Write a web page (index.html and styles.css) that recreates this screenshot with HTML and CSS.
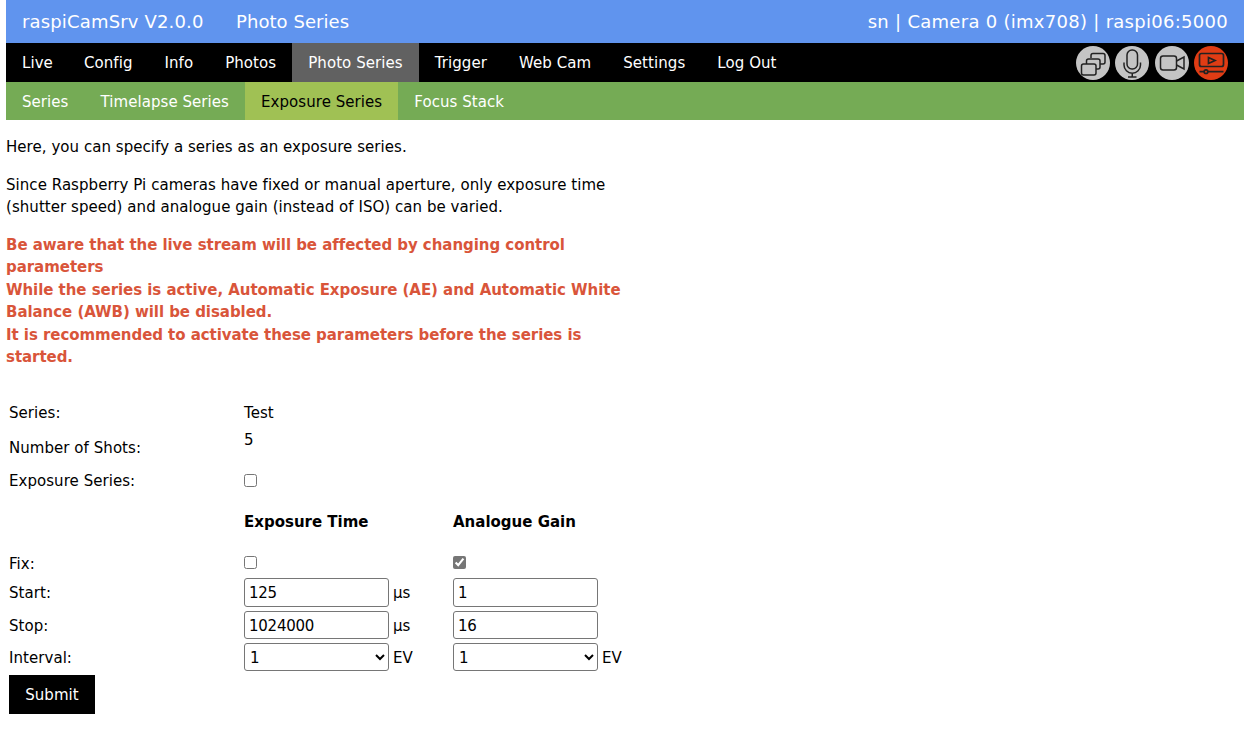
FILE: index.html
```html
<!DOCTYPE html>
<html lang="en">
<head>
<meta charset="utf-8">
<title>raspiCamSrv</title>
<link rel="stylesheet" href="styles.css">
</head>
<body>
<header class="top">
  <div class="top-left"><span>raspiCamSrv V2.0.0</span><span class="page-name">Photo Series</span></div>
  <div class="top-right">sn | Camera 0 (imx708) | raspi06:5000</div>
</header>
<nav class="nav">
  <a class="nav-item">Live</a><a class="nav-item">Config</a><a class="nav-item">Info</a><a class="nav-item">Photos</a><a class="nav-item active">Photo Series</a><a class="nav-item">Trigger</a><a class="nav-item">Web Cam</a><a class="nav-item">Settings</a><a class="nav-item">Log Out</a>
  <div class="icons">
    <span class="icon"><svg viewBox="0 0 34 34" width="34" height="34" fill="none" stroke="#222" stroke-width="1.500"><path d="M15 12v-2.500a2 2 0 0 1 2-2h10a2 2 0 0 1 2 2v6.500a2 2 0 0 1-2 2h-3"/><path d="M10.500 18v-3a2 2 0 0 1 2-2h9.500a2 2 0 0 1 2 2v6a2 2 0 0 1-2 2h-2"/><rect x="5.500" y="18" width="14.500" height="11" rx="2"/></svg></span>
    <span class="icon"><svg viewBox="0 0 34 34" width="34" height="34" fill="none" stroke="#222" stroke-width="1.500"><rect x="12" y="4" width="10.500" height="19" rx="5"/><path d="M9 16.500v2.500a8.250 8.250 0 0 0 16.500 0v-2.500M17.250 27.500V31M13 31h8.500"/></svg></span>
    <span class="icon"><svg viewBox="0 0 34 34" width="34" height="34" fill="none" stroke="#222" stroke-width="1.500"><rect x="5.500" y="10" width="16" height="14" rx="2.500"/><path d="M21.500 15l7.500-4v12l-7.500-4"/></svg></span>
    <span class="icon live"><svg viewBox="0 0 34 34" width="34" height="34" fill="none" stroke="#222" stroke-width="1.700"><rect x="5.500" y="7.500" width="24" height="13" rx="2"/><path d="M14.500 11.500l6.500 3-6.500 3z"/><path d="M5.500 25.700h4.500M14 25.700h15.500"/><circle cx="12" cy="25.700" r="1.800"/></svg></span>
  </div>
</nav>
<nav class="subnav">
  <a class="sub-item">Series</a><a class="sub-item">Timelapse Series</a><a class="sub-item active">Exposure Series</a><a class="sub-item">Focus Stack</a>
</nav>
<main class="content">
  <p class="intro">Here, you can specify a series as an exposure series.</p>
  <p class="para">Since Raspberry Pi cameras have fixed or manual aperture, only exposure time (shutter speed) and analogue gain (instead of ISO) can be varied.</p>
  <p class="warn">Be aware that the live stream will be affected by changing control parameters<br>While the series is active, Automatic Exposure (AE) and Automatic White Balance (AWB) will be disabled.<br>It is recommended to activate these parameters before the series is started.</p>
  <form class="form">
    <table class="tbl">
      <tr class="r-series"><td class="c1">Series:</td><td colspan="3">Test</td></tr>
      <tr class="r-shots"><td class="c1 low">Number of Shots:</td><td colspan="3" class="high">5</td></tr>
      <tr class="r-exp"><td class="c1">Exposure Series:</td><td colspan="3"><input class="check" type="checkbox"></td></tr>
      <tr class="r-head"><td class="c1"></td><th class="c2">Exposure Time</th><th colspan="2">Analogue Gain</th></tr>
      <tr class="r-fix"><td class="c1">Fix:</td><td class="c2"><input class="check" type="checkbox"></td><td colspan="2"><input class="check" type="checkbox" checked></td></tr>
      <tr class="r-in r-start"><td class="c1">Start:</td><td class="c2"><input class="field tall" value="125"><span class="unit">µs</span></td><td class="c3"><input class="field tall" value="1"></td></tr>
      <tr class="r-in"><td class="c1">Stop:</td><td class="c2"><input class="field" value="1024000"><span class="unit">µs</span></td><td class="c3"><input class="field" value="16"></td></tr>
      <tr class="r-in"><td class="c1">Interval:</td><td class="c2"><select class="field pick"><option>1</option></select><span class="unit">EV</span></td><td class="c3"><select class="field pick"><option>1</option></select><span class="unit">EV</span></td></tr>
    </table>
    <button class="submit" type="button">Submit</button>
  </form>
</main>
</body>
</html>
```
FILE: styles.css
```css
* { box-sizing: border-box; }
html, body { margin: 0; }
body {
  padding: 0 5px 0 6px;
  font-family: "DejaVu Sans", Verdana, sans-serif;
  font-size: 15px;
  line-height: 22.5px;
  letter-spacing: 0.05px;
  color: #000;
  background: #fff;
}
.top {
  height: 43px;
  background: #6094ee;
  color: #fff;
  font-size: 18px;
  display: flex;
  justify-content: space-between;
  align-items: center;
  padding: 2px 16px 0;
}
.top-left { display: flex; gap: 32.500px; letter-spacing: 0.16px; }
.page-name { letter-spacing: 0.05px; }
.top-right { letter-spacing: 0.28px; }
.nav {
  height: 39px;
  background: #000;
  color: #fff;
  display: flex;
  align-items: stretch;
}
.nav-item { padding: 2px 16px 0; display: flex; align-items: center; letter-spacing: 0.07px; }
.nav-item:first-child { padding-right: 15px; }
.nav-item.active { background: #616161; }
.icons { margin-left: auto; display: flex; gap: 5.340px; align-items: center; padding: 1px 16px 0 0; }
.icon { width: 34px; height: 34px; border-radius: 50%; background: #c4c4c4; display: block; }
.icon.live { background: #e03c14; }
.icon svg { display: block; }
.subnav {
  height: 38px;
  background: #75ab55;
  color: #fff;
  display: flex;
}
.sub-item { padding: 2px 16px 0; display: flex; align-items: center; letter-spacing: 0.06px; }
.sub-item.active { background: #a0c154; color: #000; }
.content { width: 630px; }
.intro { margin: 16px 0 15px; }
.para { margin: 15px 0; }
.warn { margin: 15px 0 0; color: #d9553a; font-weight: 700; letter-spacing: -0.05px; }
.form { margin-top: 30px; }
.tbl { border-collapse: collapse; }
.tbl td, .tbl th { padding: 0 3px; text-align: left; font-weight: 400; vertical-align: middle; }
.tbl th { font-weight: 700; letter-spacing: 0; padding-bottom: 1px; }
.c1 { width: 235px; }
.c2 { width: 209px; }
.c3 { width: 180px; }
.r-series { height: 30px; }
.r-shots { height: 38px; }
.r-exp { height: 30px; }
.r-head { height: 53px; }
.r-fix { height: 28.500px; }
.r-in { height: 32px; }
.r-start { height: 33px; }
.tbl .r-in td { vertical-align: top; line-height: 30px; }
.tbl .low { padding-top: 2px; }
.tbl .high { vertical-align: top; }
.check { width: 13px; height: 13px; margin: 0 0 3px; display: block; accent-color: #767676; }
.field {
  width: 145px;
  height: 28px;
  margin: 0;
  padding: 2px 4px 1px;
  font: 15px "DejaVu Sans", Verdana, sans-serif;
  letter-spacing: -0.25px;
  border: 1px solid #767676;
  border-radius: 3px;
  background: #fff;
  color: #000;
  vertical-align: top;
}
.tall { height: 29px; }
.pick { padding: 2px 1px 1px; }
.unit { margin-left: 4px; }
.submit {
  display: block;
  margin: 0 0 0 3px;
  width: 86px;
  height: 39px;
  border: 0;
  background: #000;
  color: #fff;
  font: 15px "DejaVu Sans", Verdana, sans-serif;
  letter-spacing: 0.05px;
}
```
